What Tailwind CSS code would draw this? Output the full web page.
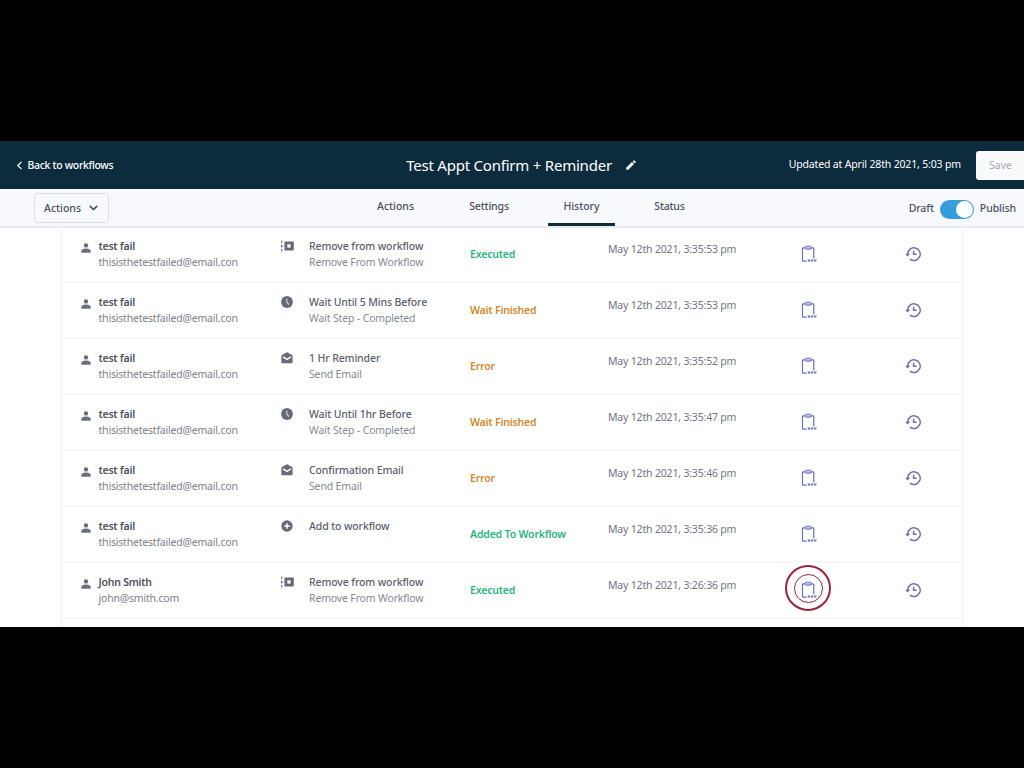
<!DOCTYPE html>
<html lang="en">
<head>
    <meta charset="UTF-8">
    <meta name="viewport" content="width=device-width, initial-scale=1.0">
    <title>Workflow History</title>

    <!-- Tailwind CSS CDN -->
    <script src="https://cdn.jsdelivr.net/npm/@tailwindcss/browser@4"></script>
</head>
<body class="h-screen overflow-hidden bg-black pt-[141px] font-['Noto_Sans','Open_Sans',sans-serif] text-[10.5px] text-[#4a5160]">

    <!-- Icons -->
    <svg class="hidden">
        <symbol id="user" viewBox="0 0 10 10">
            <circle cx="5" cy="2.4" r="2.2" fill="currentColor"/>
            <path d="M0.3 9.8V8.4C0.3 6.6 2.2 5.6 5 5.6S9.7 6.6 9.7 8.4V9.8Z" fill="currentColor"/>
        </symbol>
        <symbol id="remove" viewBox="0 0 14 12">
            <path d="M1.7 0.4V3.2M1.7 4.6V7.4M1.7 8.8V11.6" stroke="currentColor"/>
            <path d="M0.8 6H3.2" stroke="currentColor"/>
            <rect x="4.4" y="1.4" width="9.4" height="9.2" rx="1" fill="currentColor"/>
            <path d="M7.5 4.5L10.5 7.5M10.5 4.5L7.5 7.5" stroke="#fff" stroke-width="1.7"/>
        </symbol>
        <symbol id="clock" viewBox="0 0 12 12">
            <circle cx="6" cy="6" r="5.9" fill="currentColor"/>
            <path d="M5.8 2.5V6.2L8 8.6" fill="none" stroke="#d5d7dc" stroke-width="1.1"/>
        </symbol>
        <symbol id="mail" viewBox="0 0 12 12">
            <path d="M0.4 4.2C0.4 3.7 0.6 3.4 1 3.1L5.4 0.5Q6 0.1 6.6 0.5L11 3.1C11.4 3.4 11.6 3.7 11.6 4.2V10.2Q11.6 11.3 10.5 11.3H1.5Q0.4 11.3 0.4 10.2Z" fill="currentColor"/>
            <path d="M2 4.8L6 7.3L10 4.8" fill="none" stroke="#fff" stroke-width="1.5"/>
        </symbol>
        <symbol id="plus" viewBox="0 0 12 12">
            <circle cx="6" cy="6" r="5.7" fill="currentColor"/>
            <path d="M6 3.2V8.8M3.2 6H8.8" stroke="#fff" stroke-width="1.5"/>
        </symbol>
        <symbol id="clipboard" viewBox="0 0 16 18">
            <path d="M4 2.8H2.4Q1.5 2.8 1.5 3.7V15.2Q1.5 16.1 2.4 16.1H5.6M10.2 2.8H11.9Q12.8 2.8 12.8 3.7V13.4" fill="none" stroke="currentColor" stroke-width="1.2"/>
            <rect x="4" y="1.2" width="6.3" height="3" rx="1.4" fill="#c5c6ea" stroke="currentColor"/>
            <path d="M6.8 15.5H9M10 15.5H12.2M13.2 15.5H15.4" stroke="currentColor" stroke-width="2"/>
        </symbol>
        <symbol id="history" viewBox="0 0 16 16">
            <path d="M2.6 8.4A6.3 6.3 0 1 1 5 13.1" fill="none" stroke="currentColor" stroke-width="1.5"/>
            <path d="M0.2 7.8H5L2.6 10.5Z" fill="currentColor"/>
            <path d="M8.6 4.6V8.2H11.6" fill="none" stroke="currentColor" stroke-width="1.4"/>
        </symbol>
    </svg>

    <div class="h-[486px] overflow-hidden bg-white">
        <!-- Header -->
        <header class="grid h-12 grid-cols-[1fr_auto_1fr] items-center bg-[#0c2b3d] text-white">
            <a href="#" class="flex items-center pl-4">
                <svg class="mr-[4.5px] h-[9px] w-[7px]" viewBox="0 0 7 9" fill="none" stroke="currentColor" stroke-width="1.2"><path d="M5.5 0.8L1.8 4.5L5.5 8.2"/></svg>
                <span class="pt-px font-medium tracking-[-0.33px]">Back to workflows</span>
            </a>
            <div class="flex items-center pl-[18px]">
                <h1 class="text-[15px] tracking-[-0.22px]">Test Appt Confirm + Reminder</h1>
                <svg class="ml-[14px] h-[10px] w-[10px]" viewBox="0 0 10 10" fill="currentColor"><path d="M0.2 9.8V7.7L5.9 2L8 4.1L2.3 9.8ZM6.6 1.3L7.6 0.4Q8 0 8.4 0.4L9.6 1.6Q10 2 9.6 2.4L8.7 3.4Z"/></svg>
            </div>
            <div class="flex items-center justify-end">
                <span class="mr-[15px] pb-px tracking-[-0.16px] whitespace-nowrap">Updated at April 28th 2021, 5:03 pm</span>
                <button class="h-[29px] w-12 rounded-l-[3px] bg-[#f9fafc] pt-px pl-px text-[#a7a9b2]">Save</button>
            </div>
        </header>

        <!-- Toolbar -->
        <nav class="flex h-[39px] border-b-2 border-[#e9eaeb] bg-[#f8f9fc] font-medium">
            <div class="w-[361px] pt-1 pl-[34px]">
                <button class="flex h-[30px] w-[75px] items-center rounded-[3px] border border-[#dddfe4] pl-[9px]">
                    <span class="pt-px">Actions</span>
                    <svg class="ml-[8px] h-[6px] w-[9px]" viewBox="0 0 9 6" fill="none" stroke="currentColor" stroke-width="1.7"><path d="M0.8 0.8L4.5 4.5L8.2 0.8"/></svg>
                </button>
            </div>
            <div class="flex flex-1 text-center leading-[34px]">
                <a href="#" class="w-[69px]">Actions</a>
                <a href="#" class="ml-[25px] w-[68px] tracking-[-0.15px]">Settings</a>
                <a href="#" class="ml-[25px] h-[37px] w-[67px] border-b-3 border-[#102b38]">History</a>
                <a href="#" class="ml-[21px] w-[67px] tracking-[-0.2px]">Status</a>
            </div>
            <div class="flex items-center pt-px pr-2">
                <span class="pt-px tracking-[-0.1px]">Draft</span>
                <span class="mx-[6px] mt-[2px] flex h-[19px] w-[34px] justify-end rounded-full bg-[#359ddb] p-px"><span class="h-[17px] w-[17px] rounded-full bg-white"></span></span>
                <span class="pt-px tracking-[-0.1px]">Publish</span>
            </div>
        </nav>

        <!-- Execution history -->
        <main id="rows" class="-mt-px ml-[60px] h-[420px] w-[904px] border-x-2 border-[#f7f7f8]"></main>
    </div>

    <script>
        const rows = [
            ['test fail', 'thisisthetestfailed@email.con', 'remove', 'Remove from workflow', 'Remove From Workflow', 'Executed', '3:35:53'],
            ['test fail', 'thisisthetestfailed@email.con', 'clock', 'Wait Until 5 Mins Before', 'Wait Step - Completed', 'Wait Finished', '3:35:53'],
            ['test fail', 'thisisthetestfailed@email.con', 'mail', '1 Hr Reminder', 'Send Email', 'Error', '3:35:52'],
            ['test fail', 'thisisthetestfailed@email.con', 'clock', 'Wait Until 1hr Before', 'Wait Step - Completed', 'Wait Finished', '3:35:47'],
            ['test fail', 'thisisthetestfailed@email.con', 'mail', 'Confirmation Email', 'Send Email', 'Error', '3:35:46'],
            ['test fail', 'thisisthetestfailed@email.con', 'plus', 'Add to workflow', '', 'Added To Workflow', '3:35:36'],
            ['John Smith', 'john@smith.com', 'remove', 'Remove from workflow', 'Remove From Workflow', 'Executed', '3:26:36']
        ];
        const statusColor = {
            'Executed': 'text-[#2bb57d]',
            'Added To Workflow': 'text-[#2bb57d]',
            'Wait Finished': 'text-[#d08a2c]',
            'Error': 'text-[#d08a2c]'
        };

        document.getElementById('rows').innerHTML = rows.map(([name, email, icon, title, sub, status, time], i) => `
            <div class="grid h-14 grid-cols-[19px_17px_182px_29px_161px_138px_148px_104px_1fr] border-b-2 border-[#f6f7f8] leading-4 tracking-[-0.18px] whitespace-nowrap">
                <span></span>
                <svg class="mt-[15.5px] h-[10px] w-[10px] text-[#686e7a]"><use href="#user"/></svg>
                <div class="pt-[11px] pl-[0.5px]"><p class="font-semibold tracking-[-0.24px] text-[#4a5160]">${name}</p><p class="text-[#7b808b] tracking-[-0.2px]">${email}</p></div>
                <svg class="mt-[12.5px] h-3 text-[#646b78] ${icon === 'remove' ? 'w-[14px]' : 'ml-[0.5px] w-3'}"><use href="#${icon}"/></svg>
                <div class="pt-[11px]"><p class="font-medium tracking-[-0.12px] text-[#5b616d]">${title}</p><p class="tracking-[-0.15px] text-[#858993]">${sub}</p></div>
                <p class="pt-[19px] font-semibold ${statusColor[status]}">${status}</p>
                <p class="pt-[14px] text-[#70757f]">May 12th 2021, ${time} pm</p>
                <div class="relative w-[104px] pt-[18px] pl-[45px] text-[#6b6cbe]">
                    <svg class="h-[18px] w-4"><use href="#clipboard"/></svg>
                    ${i === rows.length - 1 ? `<span class="absolute top-[2px] left-[29px] flex h-[46px] w-[46px] items-center justify-center rounded-full border-2 border-[#98263a]"><span class="h-[29px] w-[29px] rounded-full border border-[#8f2c45]"></span></span>` : ''}
                </div>
                <svg class="mt-[19px] ml-[44.5px] h-4 w-4 text-[#6b6cbe]"><use href="#history"/></svg>
            </div>`).join('');
    </script>
</body>
</html>
